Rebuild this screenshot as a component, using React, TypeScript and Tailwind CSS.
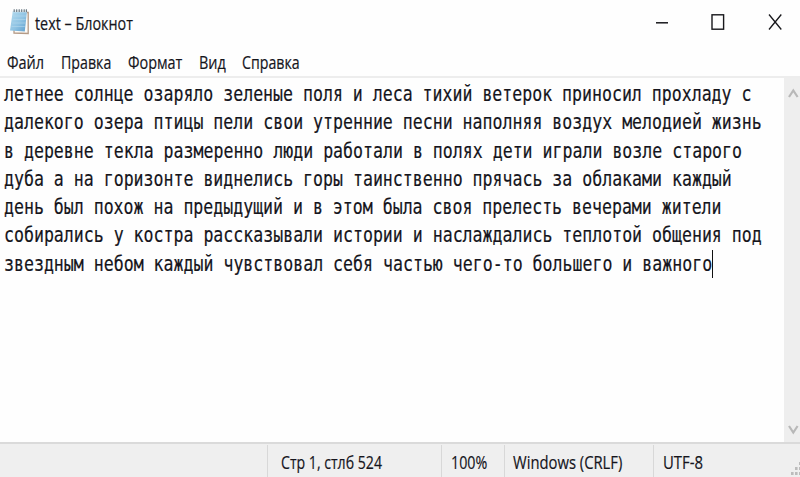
import { useLayoutEffect, useRef, useState } from "react";

type FitProps = { text: string; width: number; className?: string };

// A single line of text condensed horizontally to the given width.
function Fit({ text, width, className = "" }: FitProps) {
  const ref = useRef<HTMLSpanElement>(null);
  const [scale, setScale] = useState(1);
  useLayoutEffect(() => {
    if (ref.current) setScale(width / ref.current.offsetWidth);
  }, [text, width]);
  return (
    <span className={`block shrink-0 ${className}`} style={{ width }}>
      <span
        ref={ref}
        className="inline-block origin-left whitespace-pre"
        style={{ transform: `scaleX(${scale})` }}
      >
        {text}
      </span>
    </span>
  );
}

const CHAR = 9.97;

const lines = [
  "летнее солнце озаряло зеленые поля и леса тихий ветерок приносил прохладу с",
  "далекого озера птицы пели свои утренние песни наполняя воздух мелодией жизнь",
  "в деревне текла размеренно люди работали в полях дети играли возле старого",
  "дуба а на горизонте виднелись горы таинственно прячась за облаками каждый",
  "день был похож на предыдущий и в этом была своя прелесть вечерами жители",
  "собирались у костра рассказывали истории и наслаждались теплотой общения под",
  "звездным небом каждый чувствовал себя частью чего-то большего и важного",
];

function NotepadIcon() {
  return (
    <svg className="block" width="22" height="28" viewBox="0 0 22 28">
      <defs>
        <linearGradient id="page" x1="0" y1="0" x2="1" y2="1">
          <stop offset="0" stopColor="#b5dcef" />
          <stop offset="0.55" stopColor="#8fc3e3" />
          <stop offset="1" stopColor="#5e9fce" />
        </linearGradient>
      </defs>
      <path d="M5 4L19.2 4.5V25.5L5 25Z" fill="#fdfaf6" stroke="#b49a86" strokeWidth="1.3" />
      <path d="M3.8 3H18L15.8 23.6L1 22.6Z" fill="url(#page)" />
      <path d="M4.2 8H17M3.7 11.5H16.6M3.2 15H16.2M2.6 18.5H15.8" stroke="#b5d9ec" strokeWidth="0.6" />
      <path d="M4.4 3.2H18" stroke="#e4ebee" strokeWidth="2" />
      <path d="M5.2 1.2V4M7.7 1.2V4M10.2 1.2V4M12.7 1.2V4M15.2 1.2V4M17.4 1.2V4" stroke="#64747f" strokeWidth="1.1" />
    </svg>
  );
}

export default function App() {
  return (
    <div className="flex h-[477px] w-[800px] flex-col overflow-hidden bg-[#fefefe] font-['Open_Sans','Noto_Sans',sans-serif] text-[18px] text-[#15151c] [-webkit-text-stroke:0.2px]">
      <header className="flex h-[46px] shrink-0 items-start">
        <div className="pt-[8px] pl-[9px]">
          <NotepadIcon />
        </div>
        <Fit text="text – Блокнот" width={98} className="ml-[4px] pt-[11px] leading-[24px]" />
        <svg className="ml-auto block" width="150" height="46" viewBox="0 0 150 46" fill="none" stroke="#18181c">
          <path d="M6 22.8H18" strokeWidth="1.5" />
          <rect x="62" y="14.8" width="11.6" height="14.4" strokeWidth="1.4" />
          <path d="M119 14.5L131.3 29.5M131.3 14.5L119 29.5" strokeWidth="1.3" />
        </svg>
      </header>
      <nav className="flex h-[30px] shrink-0 pt-[4px] pl-[7px] leading-[24px]">
        <Fit text="Файл" width={37} className="mr-[17px]" />
        <Fit text="Правка" width={50.5} className="mr-[16.5px]" />
        <Fit text="Формат" width={54.5} className="mr-[16.5px]" />
        <Fit text="Вид" width={26.5} className="mr-[16.5px]" />
        <Fit text="Справка" width={57.5} />
      </nav>
      <main className="flex min-h-0 flex-1 border-t-2 border-[#ededed]">
        <div className="flex flex-1 flex-col bg-[#fefefe] pt-[2.1px] pl-[4px] font-['DejaVu_Sans_Mono',monospace] text-[20.5px] leading-[28.25px]">
          {lines.map((line, i) => (
            <div key={i} className="flex">
              <Fit text={line} width={line.length * CHAR} />
              {i === lines.length - 1 && <span className="h-[28px] w-[1.4px] bg-[#111]" />}
            </div>
          ))}
        </div>
        <div className="flex w-[16px] flex-col justify-between bg-[#eeeeee] pt-[9px] pb-[6px]">
          <svg width="16" height="12" viewBox="0 0 16 12" fill="none" stroke="#b8b8b8" strokeWidth="2.2">
            <path d="M5 10L9.3 3.5L13.6 10" />
          </svg>
          <svg width="16" height="12" viewBox="0 0 16 12" fill="none" stroke="#b8b8b8" strokeWidth="2.2">
            <path d="M5 2L9.3 8.5L13.6 2" />
          </svg>
        </div>
      </main>
      <footer className="flex h-[35px] shrink-0 border-t-2 border-[#dadada] bg-[#efefef] pt-[1px] text-[19px] leading-[34px]">
        <div className="w-[267px]" />
        <div className="w-[174px] border-l border-[#d8d8d8] pl-[13px]">
          <Fit text="Стр 1, стлб 524" width={101} />
        </div>
        <div className="w-[63px] border-l border-[#d8d8d8] pl-[9px]">
          <Fit text="100%" width={36} />
        </div>
        <div className="w-[149px] border-l border-[#d8d8d8] pl-[8px]">
          <Fit text="Windows (CRLF)" width={109} />
        </div>
        <div className="w-[131px] border-l border-[#d8d8d8] pl-[9px]">
          <Fit text="UTF-8" width={40} />
        </div>
        <svg className="block" width="16" height="32" viewBox="0 0 16 32" fill="#bcbcbc">
          <path d="M15 17h2v3h-2zM11 22h2.6v3H11zM15 22h2v3h-2zM7 27h2.6v3H7zM11 27h2.6v3H11zM15 27h2v3h-2z" />
        </svg>
      </footer>
    </div>
  );
}
